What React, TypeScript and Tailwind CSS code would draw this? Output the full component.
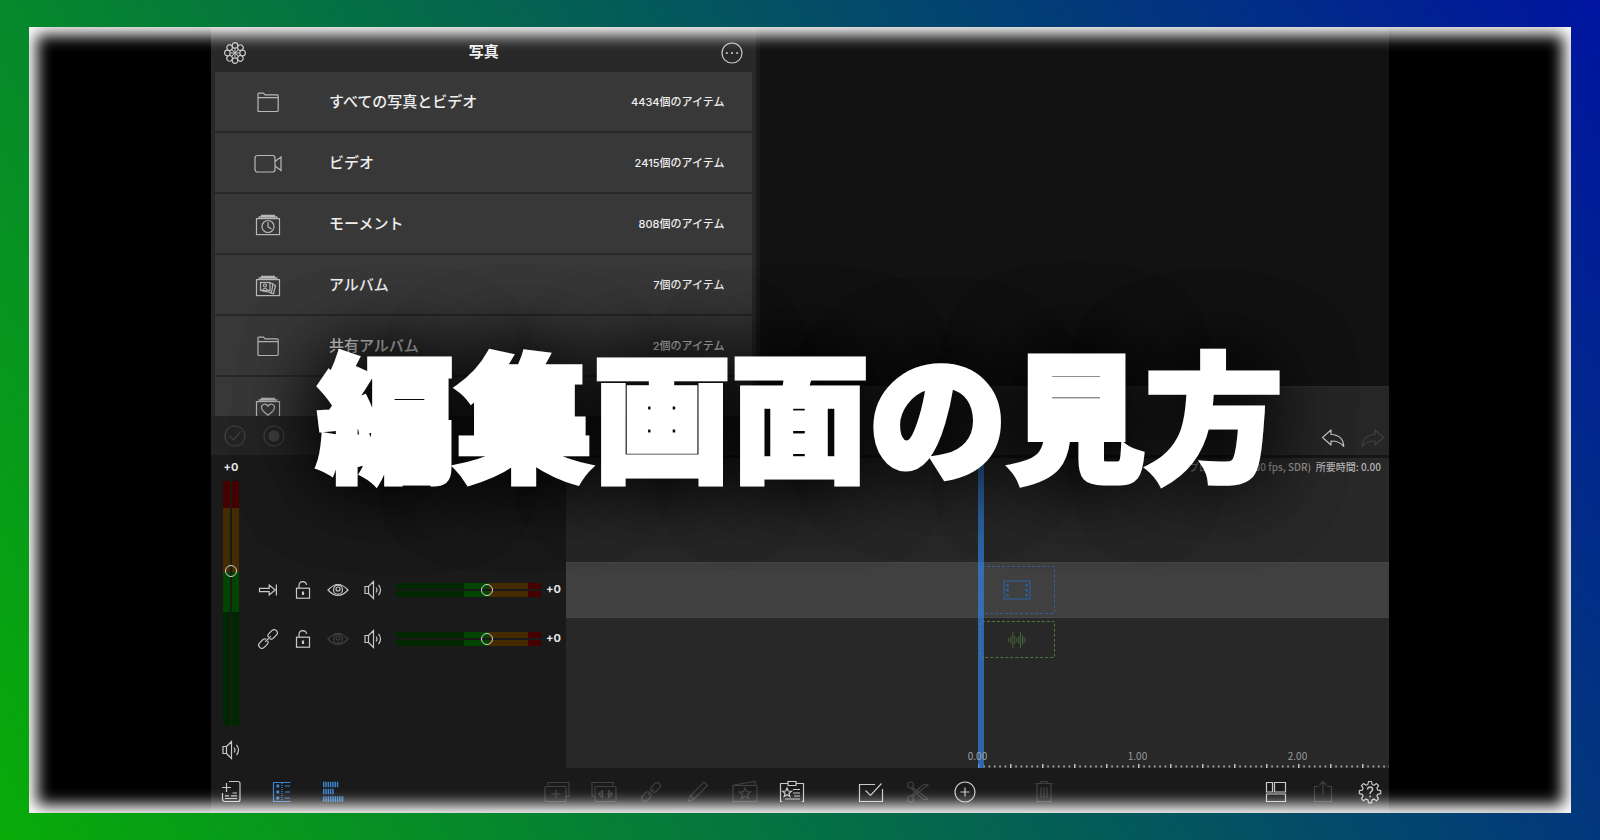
import clsx from "clsx";
import type { ReactNode } from "react";

type IconProps = { w?: number; h?: number; children: ReactNode };

function Icon({ w = 24, h = 24, children }: IconProps) {
  return (
    <svg
      width={w}
      height={h}
      viewBox={`0 0 ${w} ${h}`}
      fill="none"
      stroke="currentColor"
      strokeWidth="1.2"
      aria-hidden="true"
      className="shrink-0"
    >
      {children}
    </svg>
  );
}

function FlowerIcon() {
  return (
    <Icon>
      {[0, 45, 90, 135, 180, 225, 270, 315].map((angle) => (
        <g key={angle} transform={`rotate(${angle} 12 12)`}>
          <circle cx="12" cy="4.4" r="2.800" />
          <path d="M12 12V7.200" strokeWidth="1" />
        </g>
      ))}
    </Icon>
  );
}

function MoreIcon() {
  return (
    <Icon>
      <circle cx="12" cy="12" r="10" />
      <g fill="currentColor" stroke="none">
        <circle cx="6.8" cy="12" r="1.1" />
        <circle cx="12" cy="12" r="1.1" />
        <circle cx="17.2" cy="12" r="1.1" />
      </g>
    </Icon>
  );
}

function FolderIcon() {
  return (
    <Icon>
      <path d="M2 20.5V3.2q0-1 1-1h4.5l1.6 1.6H21q1.2 0 1.2 1.2v14.500q0 1-1 1H3q-1 0-1-1M2 6.600h20" />
    </Icon>
  );
}

function VideoIcon() {
  return (
    <Icon w={28} h={20}>
      <rect x="1" y="1.500" width="20" height="16.500" rx="2.500" />
      <path d="M21 7.500l6-4.500v13.500l-6-4.500" />
    </Icon>
  );
}

function StackIcon({ children }: { children: ReactNode }) {
  return (
    <Icon w={26}>
      <path d="M6 2.400h14M3.500 4h19" strokeWidth="1.500" />
      <rect x="1.500" y="5.600" width="23" height="16" />
      {children}
    </Icon>
  );
}

function MomentIcon() {
  return (
    <StackIcon>
      <circle cx="13" cy="13.500" r="6" />
      <path d="M13 9v4.800l3.500 2.200" />
    </StackIcon>
  );
}

function AlbumIcon() {
  return (
    <StackIcon>
      <rect x="5.500" y="8.500" width="9.500" height="8" />
      <circle cx="10" cy="11.500" r="1.500" />
      <path d="M7 16.500q3-4.500 6 0M15 9l3 .6-1.500 9-9-1.600M18 10.500l2.500 1-2 8.200-4-1" />
    </StackIcon>
  );
}

function HeartIcon() {
  return (
    <StackIcon>
      <path d="M13 19.200c-4-3-6.500-5-6.500-7.800 0-3.600 4.800-4.400 6.500-1.200 1.700-3.200 6.500-2.400 6.500 1.200 0 2.800-2.500 4.800-6.500 7.800z" />
    </StackIcon>
  );
}

function UndoIcon() {
  return (
    <Icon>
      <path
        d="M1.500 10.500L10 3v4.500c8 .3 12.500 4.500 12.700 12-2.700-4-6.200-5.500-12.700-5.500v4z"
        strokeLinejoin="round"
      />
    </Icon>
  );
}

function SpeakerIcon() {
  return (
    <Icon w={20} h={20}>
      <path d="M2 6.500h3.500v7H2zM5.500 6.500l5-5v17l-5-5M13 7.500q2 2.500 0 5M15.500 4.800q4 5.200 0 10.400" />
    </Icon>
  );
}

function LockIcon() {
  return (
    <Icon w={20} h={20}>
      <rect x="3.500" y="8.200" width="13" height="10" />
      <path d="M6 8V5.200Q6.200 1.800 9.700 1.600 13.200 1.800 13.600 4.800" />
      <path d="M10 11.500v3.500" strokeWidth="2.200" />
    </Icon>
  );
}

function EyeIcon() {
  return (
    <Icon w={22} h={20}>
      <path d="M1 10Q11-1 21 10 11 21 1 10z" />
      <circle cx="11" cy="9.700" r="4.500" />
      <circle cx="11" cy="9" r="2" />
    </Icon>
  );
}

function ChainIcon() {
  return (
    <Icon w={22} h={22}>
      <g transform="rotate(-45 11 11)">
        <path d="M7.500 7.800H2.400a3.200 3.200 0 0 0 0 6.400h4.200a3.200 3.200 0 0 0 3-2.200M9.600 10a3.200 3.200 0 0 0-2.100-2.200" />
        <path d="M14.500 14.200h5.100a3.200 3.200 0 0 0 0-6.400h-4.200a3.200 3.200 0 0 0-3 2.200M12.400 12a3.200 3.200 0 0 0 2.100 2.200M7 11h8" />
      </g>
    </Icon>
  );
}

function InsertIcon() {
  return (
    <Icon w={20} h={20}>
      <path d="M1.500 8.300h9.700V5l6 5-6 5v-3.300H1.500zM18.400 4.500v11" />
    </Icon>
  );
}

function ScissorsIcon() {
  return (
    <Icon>
      <circle cx="4.500" cy="5" r="3" />
      <circle cx="4.500" cy="19" r="3" />
      <path d="M6.500 7.200L22 19q-3 1.500-6-.8L5 8M6.500 16.800L22 5q-3-1.500-6 .8L5 16" />
    </Icon>
  );
}

function GearHelpIcon() {
  return (
    <Icon>
      <path
        d="M10.500 1.500h3l.6 3 1.900.8 2.500-1.700 2.100 2.100L18.900 8.200l.8 1.900 3 .6v3l-3 .6-.8 1.900 1.700 2.500-2.100 2.100-2.500-1.700-1.900.8-.6 3h-3l-.6-3-1.900-.8-2.500 1.700-2.100-2.100 1.700-2.500-.8-1.900-3-.6v-3l3-.6.8-1.900-1.700-2.500 2.100-2.100L8 5.300l1.900-.8z"
        strokeLinejoin="round"
      />
      <path d="M9.500 9.500q.2-2.500 2.600-2.500t2.500 2.300q0 1.300-1.300 2.200t-1.200 2.500M12.100 15.500v1.800" strokeWidth="1.500" />
    </Icon>
  );
}

const photoRows = [
  { name: "すべての写真とビデオ", count: 4434, icon: <FolderIcon /> },
  { name: "ビデオ", count: 2415, icon: <VideoIcon /> },
  { name: "モーメント", count: 808, icon: <MomentIcon /> },
  { name: "アルバム", count: 7, icon: <AlbumIcon /> },
  { name: "共有アルバム", count: 2, icon: <FolderIcon /> },
  { name: "", count: null, icon: <HeartIcon /> },
];

function IconButton({
  label,
  dim,
  active,
  wide,
  children,
}: {
  label: string;
  dim?: boolean;
  active?: boolean;
  wide?: boolean;
  children: ReactNode;
}) {
  return (
    <button
      type="button"
      aria-label={label}
      className={clsx(
        "flex items-center justify-center",
        wide ? "w-[38px]" : "w-6",
        dim ? "text-[#404040]" : active ? "text-[#3b82cc]" : "text-[#c8c8c8]"
      )}
    >
      {children}
    </button>
  );
}

function PhotoPanel() {
  return (
    <section className="flex h-[389px] flex-col overflow-hidden bg-[#282828] px-1">
      <header className="flex h-[45px] shrink-0 items-center justify-between px-2 pt-1.5">
        <IconButton label="写真ライブラリ">
          <FlowerIcon />
        </IconButton>
        <h2 className="text-[15px] font-bold text-[#f0f0f0]">写真</h2>
        <IconButton label="その他">
          <MoreIcon />
        </IconButton>
      </header>
      <ul className="flex flex-col gap-0.5">
        {photoRows.map((row, i) => (
          <li key={i} className="flex h-[59px] shrink-0 items-center bg-[#383838] pt-0.5 pr-7 text-[#efefef]">
            <span className="flex w-[106px] justify-center text-[#b8b8b8]">{row.icon}</span>
            <span className="flex-1 pl-2 text-[15px] font-medium">{row.name}</span>
            {row.count !== null && (
              <span className="text-[11px] font-medium">{row.count}個のアイテム</span>
            )}
          </li>
        ))}
      </ul>
    </section>
  );
}

const sliderBase =
  "absolute inset-0 h-full w-full appearance-none bg-transparent [&::-webkit-slider-thumb]:h-3 [&::-webkit-slider-thumb]:w-3 [&::-webkit-slider-thumb]:appearance-none [&::-webkit-slider-thumb]:rounded-full [&::-webkit-slider-thumb]:border [&::-webkit-slider-thumb]:border-[#d0d0d0]";

function TrackMeter({ label }: { label: string }) {
  return (
    <div className="relative flex h-3.5 w-[145px] flex-col gap-0.5">
      {[0, 1].map((bar) => (
        <div key={bar} className="flex flex-1">
          <span className="w-[68px] bg-[#002800]" />
          <span className="w-[25px] bg-[#004500]" />
          <span className="w-[39px] bg-[#452c00]" />
          <span className="flex-1 bg-[#450000]" />
        </div>
      ))}
      <input type="range" aria-label={label} defaultValue={64} className={sliderBase} />
    </div>
  );
}

function MasterMeter() {
  return (
    <div className="relative flex h-[245px] w-4 gap-0.5">
      {[0, 1].map((bar) => (
        <div key={bar} className="flex flex-1 flex-col">
          <span className="h-[27px] bg-[#450000]" />
          <span className="h-16 bg-[#452c00]" />
          <span className="h-10 bg-[#004500]" />
          <span className="flex-1 bg-[#002800]" />
        </div>
      ))}
      <input
        type="range"
        aria-label="マスター音量"
        defaultValue={64}
        className={clsx(sliderBase, "[direction:rtl] [writing-mode:vertical-lr]")}
      />
    </div>
  );
}

function TrackControls({ name, linked }: { name: string; linked?: boolean }) {
  return (
    <div className="flex h-[49px] items-center">
      <div className="flex gap-[11px]">
        <IconButton label={linked ? "リンク" : "挿入"}>
          {linked ? <ChainIcon /> : <InsertIcon />}
        </IconButton>
        <IconButton label="ロック">
          <LockIcon />
        </IconButton>
        <IconButton label="表示" dim={linked}>
          <EyeIcon />
        </IconButton>
        <IconButton label="ミュート">
          <SpeakerIcon />
        </IconButton>
      </div>
      <div className="ml-[11px] flex items-center gap-[5px]">
        <TrackMeter label={name} />
        <span className="text-[11px] font-bold text-[#e6e6e6]">+0</span>
      </div>
    </div>
  );
}

function Mixer() {
  return (
    <section className="flex w-[355px] shrink-0 bg-[#1a1a1a]">
      <div className="flex w-10 flex-col items-center pt-1">
        <span className="text-[11px] leading-4 font-bold text-[#e6e6e6]">+0</span>
        <div className="mt-1.5 mb-3.5">
          <MasterMeter />
        </div>
        <IconButton label="消音">
          <SpeakerIcon />
        </IconButton>
      </div>
      <div className="pt-[110px] pl-[5px]">
        <TrackControls name="ビデオ音量" />
        <TrackControls name="オーディオ音量" linked />
      </div>
    </section>
  );
}

function Ruler() {
  return (
    <div className="mt-auto">
      <div className="ml-[50%] flex h-4 overflow-hidden text-[10px] leading-4 text-[#9a9a9a]">
        {["1.00", "2.00"].map((t) => (
          <span key={t} className="w-40 shrink-0 text-right">
            <span className="inline-block translate-x-1/2">{t}</span>
          </span>
        ))}
      </div>
      <svg className="ml-[50%] block h-1 w-1/2" aria-hidden="true">
        <defs>
          <pattern id="ticks" width="32" height="4" patternUnits="userSpaceOnUse">
            <path d="M0 0h1.500v4H0z" fill="#c4c4c4" />
            {[1, 2, 3, 4, 5].map((n) => (
              <rect key={n} x={n * 5.333} y="1.500" width="1.500" height="2" fill="#b0b0b0" />
            ))}
          </pattern>
        </defs>
        <rect width="100%" height="4" fill="url(#ticks)" />
      </svg>
    </div>
  );
}

function Timeline() {
  return (
    <section className="relative flex flex-1 flex-col overflow-hidden border-t-[3px] border-[#161616] bg-[#282828] font-['Noto_Sans_CJK_JP',sans-serif]">
      <p className="h-[104px] pr-2 text-right text-[10px] leading-[18px] font-medium whitespace-pre text-[#9a9a9a]">
        プロジェクト (30 fps, SDR)  <span className="text-[#b4b4b4]">所要時間: 0.00</span>
      </p>
      <div className="flex h-14 items-center border-y border-[#464646] bg-[#404040]">
        <div className="ml-[50%] pl-0.5">
          <div className="flex h-12 w-[75px] items-center justify-center rounded-xs border border-dashed border-[#355f93] text-[#2f5f98]">
            <Icon w={28} h={20}>
              <rect x="1" y="1" width="26" height="18" />
              <path d="M4.500 4v13M23.500 4v13" strokeWidth="2.500" strokeDasharray="2.500 2.500" />
            </Icon>
          </div>
        </div>
      </div>
      <div className="mt-[3px] ml-[50%] pl-0.5">
        <div className="flex h-[37px] w-[75px] items-center justify-center rounded-xs border border-dashed border-[#4d7a3c] text-[#3f6138]">
          <Icon w={18} h={18}>
            <path
              strokeWidth="1"
              d="M.8 7v4M2.800 5.500v7M4.800 1v16M6.800 5v8M8.800 7v4M10.800 5v8M12.500 1v16M14.300 4v10M16 6v6M17.500 8v2"
            />
          </Icon>
        </div>
      </div>
      <Ruler />
      <div className="absolute inset-y-0 left-1/2 w-1.5 bg-[#3080dc]/70" />
      <span className="absolute bottom-0.5 left-1/2 -translate-x-1/2 text-[10px] leading-5 text-[#a4a4a4]">0.00</span>
    </section>
  );
}

function Toolbar() {
  return (
    <footer className="flex h-[45px] items-center justify-between bg-[#1a1a1a] pt-0.5 pl-px">
      <div className="flex gap-[13px]">
        <IconButton label="新規プロジェクト" wide>
          <Icon>
            <path d="M10 1.500h9q2 0 2 2v16q0 2-2 2H6q-2.500 0-2.500-2.500v-6M3 7.500h9M7.500 3v9M6 18.500h12M13.500 13H18M6 15.800h4M12 15.800h6" />
          </Icon>
        </IconButton>
        <IconButton label="リスト" active wide>
          <Icon>
            <path d="M20.500 2.500h-17v19h17M15 6h5M15 12h5M15 18h5" />
            <path d="M12 3v18" strokeDasharray="1 1" />
            <g fill="currentColor" stroke="none">
              <circle cx="7.800" cy="6" r="1.700" />
              <circle cx="7.800" cy="12" r="1.700" />
              <circle cx="7.800" cy="18" r="1.700" />
            </g>
          </Icon>
        </IconButton>
        <IconButton label="タイムライン表示" active wide>
          <Icon>
            <path d="M2 4.500h16M2 11.500h11M2 19h21" strokeWidth="5.500" strokeDasharray="1.500 .8" />
          </Icon>
        </IconButton>
      </div>

      <div className="flex gap-[41px] pr-2">
        <div className="flex gap-[9px]">
          <IconButton label="追加" dim wide>
            <Icon w={26}>
              <path d="M4 5.500V2.500h21v14h-3M12 9.500v9M7.500 14h9" />
              <rect x="1" y="6.500" width="21" height="15" rx="1" />
            </Icon>
          </IconButton>
          <IconButton label="置換" dim wide>
            <Icon w={26}>
              <path d="M22 5.500V2.500H1v14h3M7.500 14h5M11.500 10.500l-4 3.500 4 3.500zM21 14h-5M17.500 10.500l4 3.500-4 3.500z" />
              <rect x="4" y="6.500" width="21" height="15" rx="1" />
            </Icon>
          </IconButton>
          <IconButton label="リンク" dim wide>
            <ChainIcon />
          </IconButton>
          <IconButton label="編集" dim wide>
            <Icon>
              <path d="M2.500 21.500l2-6L18 2l3.500 3.500L8 19zM4.500 15.500L8 19" />
            </Icon>
          </IconButton>
          <IconButton label="お気に入り" dim wide>
            <Icon w={26}>
              <rect x="1" y="5.500" width="24" height="16" />
              <path d="M2 5l21-3.500v3.500M13 8l1.600 3.700 3.900.3-3 2.500 1 4-3.500-2.200-3.500 2.200 1-4-3-2.500 3.900-.3z" />
            </Icon>
          </IconButton>
          <IconButton label="クリップボード" wide>
            <Icon w={26}>
              <path d="M3 21.500H1.500v-18H9M17 3.500h7.500v18H23M9 1.500h8v4H9zM14 9.500h7M14 13h7M15 16h6M6 19h15" />
              <path d="M8 8l1.300 3 3.200.2-2.500 2 .8 3.200L8 14.700l-2.800 1.700.8-3.200-2.500-2 3.200-.2z" />
            </Icon>
          </IconButton>
        </div>
        <div className="flex gap-[9px]">
          <IconButton label="選択" wide>
            <Icon w={26}>
              <path d="M17 4.500H1.500v17h23V9M7.500 10.500l5 5L23.500 3.500" />
            </Icon>
          </IconButton>
          <IconButton label="カット" dim wide>
            <ScissorsIcon />
          </IconButton>
          <IconButton label="項目を追加" wide>
            <Icon>
              <circle cx="12" cy="12" r="10" />
              <path d="M12 7.500v9M7.500 12h9" />
            </Icon>
          </IconButton>
        </div>
        <IconButton label="削除" dim wide>
          <Icon>
            <path d="M3.500 3.500h17M9 3.500v-2h6v2M5 3.500v18h14v-18M9 7v11M12 7v11M15 7v11" />
          </Icon>
        </IconButton>
      </div>

      <div className="flex gap-[9px]">
        <IconButton label="レイアウト" wide>
          <Icon>
            <path d="M2.500 2.500h6v9.500h-6zM10.500 2.500h11v9.500h-11zM2.500 14h19v7.500h-19z" />
          </Icon>
        </IconButton>
        <IconButton label="共有" dim wide>
          <Icon>
            <path d="M8 6.500H3.500v15h17v-15H16M12 15V2M8.500 5L12 1.500 15.500 5" />
          </Icon>
        </IconButton>
        <IconButton label="ヘルプと設定" wide>
          <GearHelpIcon />
        </IconButton>
      </div>
    </footer>
  );
}

export default function App() {
  return (
    <div className="flex min-h-screen bg-[linear-gradient(60deg,#08ac08,#0014a0)] px-[29px] py-[27px] font-[Inter,'Noto_Sans_CJK_JP',sans-serif]">
      <main className="relative flex flex-1 flex-col overflow-hidden bg-black px-[182px]">
        <div className="flex">
          <div className="flex w-[46.3%] shrink-0 flex-col">
            <PhotoPanel />
            <div className="flex h-[39px] items-center gap-[15px] bg-[#242424] pl-3">
              <IconButton label="確定" dim>
                <Icon>
                  <circle cx="12" cy="12" r="10" />
                  <path d="M6.500 12l4 4 7-8.500" />
                </Icon>
              </IconButton>
              <IconButton label="録画" dim>
                <Icon>
                  <circle cx="12" cy="12" r="10" />
                  <circle cx="12" cy="12" r="5" fill="currentColor" />
                </Icon>
              </IconButton>
            </div>
          </div>
          <div className="w-1 bg-[#1a1a1a]" />
          <div className="flex flex-1 flex-col">
            <div className="flex-1 bg-[#121212]" />
            <div className="flex h-[69px] items-end justify-end gap-4 border-t border-[#2c2c2c] bg-[#262626] pr-1 pb-1">
              <IconButton label="取り消す">
                <UndoIcon />
              </IconButton>
              <IconButton label="やり直す" dim>
                <span className="-scale-x-100">
                  <UndoIcon />
                </span>
              </IconButton>
            </div>
          </div>
        </div>

        <div className="flex flex-1">
          <Mixer />
          <Timeline />
        </div>
        <Toolbar />

        {/* white glow running round the inside of the frame */}
        <div className="pointer-events-none absolute inset-0 shadow-[inset_0_0_15px_8px_#fff]" />

        <div className="pointer-events-none absolute inset-0 flex items-center justify-center">
          <h1 className="text-[138px] leading-none font-black whitespace-nowrap text-white [-webkit-text-stroke:5px_#fff] [text-shadow:0_0_80px_#000,0_0_80px_#000]">
            編集画面の見方
          </h1>
        </div>
      </main>
    </div>
  );
}
